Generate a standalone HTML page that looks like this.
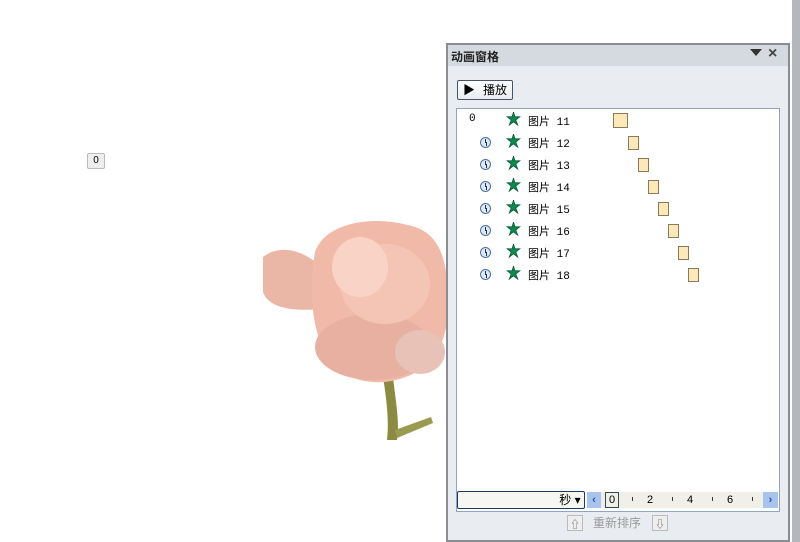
<!DOCTYPE html>
<html><head><meta charset="utf-8"><style>
body{margin:0;width:800px;height:542px;background:#fff;position:relative;overflow:hidden;font-family:"Liberation Sans","Noto Sans CJK SC",sans-serif;}
.a{position:absolute;white-space:nowrap}
.row{position:absolute;left:458px;width:300px;height:20px;font-size:11px;color:#000;font-family:"Liberation Mono","Noto Sans CJK SC",monospace;white-space:nowrap}
.clk{position:absolute;left:22px;top:3px;width:9px;height:9px;border-radius:50%;border:1px solid #4a6fa5;background:#dfe8f5}
.clk:after{content:"";position:absolute;left:4px;top:1px;width:1px;height:4px;background:#234;box-shadow:1px 3px 0 0 #234}
.star{position:absolute;left:48px;top:0px}
.nm{position:absolute;left:70px;top:1px;white-space:nowrap}
.bar{position:absolute;top:2px;width:9px;height:12px;background:#fde8b8;border:1px solid #8a7a5a}
</style></head><body>
<div class="a" style="left:87px;top:153px;width:16px;height:14px;border:1px solid #bbb;background:#eee;font-size:10px;text-align:center;line-height:14px;border-radius:2px">0</div>
<svg class="a" style="left:255px;top:212px" width="195" height="230">
<path d="M128 165 C132 190 134 210 132 228 L142 228 C145 210 140 185 138 165Z" fill="#8a8a40"/>
<path d="M140 218 L176 205 L178 211 L142 226Z" fill="#9a9a50"/>
<path d="M8 45 C30 28 60 45 70 60 L80 95 C50 100 15 100 8 80Z" fill="#eab6a6"/>
<path d="M60 40 C70 10 120 2 160 15 C190 25 195 60 192 110 C188 140 170 165 130 170 C100 172 75 160 65 130 C55 100 55 70 60 40Z" fill="#f1b9a8"/>
<ellipse cx="118" cy="135" rx="58" ry="33" fill="#e8b0a0"/>
<ellipse cx="130" cy="72" rx="45" ry="40" fill="#f4c4b4"/>
<ellipse cx="105" cy="55" rx="28" ry="30" fill="#f9d4c6"/>
<ellipse cx="165" cy="140" rx="25" ry="22" fill="#e8c2b6"/>
</svg>
<div class="a" style="left:792px;top:0;width:8px;height:542px;background:#b4b8bd"></div>
<div class="a" style="left:446px;top:43px;width:340px;height:495px;border:2px solid #8a8e93;background:#e9edf2"></div>
<div class="a" style="left:448px;top:45px;width:340px;height:21px;background:#d5dae1"></div>
<div class="a" style="left:451px;top:48px;font-size:12px;font-weight:bold;color:#222">动画窗格</div>
<div class="a" style="left:750px;top:49px;width:0;height:0;border-left:6px solid transparent;border-right:6px solid transparent;border-top:7px solid #333"></div>
<div class="a" style="left:768px;top:45px;font-size:16px;font-weight:bold;color:#444">×</div>
<div class="a" style="left:457px;top:80px;width:54px;height:18px;border:1px solid #456;border-radius:2px;background:linear-gradient(#fff,#e8ecf0);font-size:12px;line-height:18px"><span style="margin-left:5px">▶</span><span style="margin-left:8px">播放</span></div>
<div class="a" style="left:456px;top:108px;width:322px;height:402px;border:1px solid #8ea4c1;background:#fff"></div>
<svg width="0" height="0" style="position:absolute"><defs><symbol id="st" viewBox="0 0 16 16"><path d="M8 0 L9.5 5 L15 5 L10.5 8.5 L12.5 14 L8 10.5 L3.5 14 L5.5 8.5 L1 5 L6.5 5Z" fill="#0a8a4c" stroke="#053" stroke-width="0.8"/></symbol></defs></svg>
<div class="row" style="top:112px"><span class="a" style="left:11px;top:1px">0</span><svg class="star" width="15" height="15"><use href="#st"/></svg><span class="nm">图片 11</span><span class="bar" style="left:155px;width:13px;height:13px;top:1px"></span></div>
<div class="row" style="top:134px"><span class="clk"></span><svg class="star" width="15" height="15"><use href="#st"/></svg><span class="nm">图片 12</span><span class="bar" style="left:170px"></span></div>
<div class="row" style="top:156px"><span class="clk"></span><svg class="star" width="15" height="15"><use href="#st"/></svg><span class="nm">图片 13</span><span class="bar" style="left:180px"></span></div>
<div class="row" style="top:178px"><span class="clk"></span><svg class="star" width="15" height="15"><use href="#st"/></svg><span class="nm">图片 14</span><span class="bar" style="left:190px"></span></div>
<div class="row" style="top:200px"><span class="clk"></span><svg class="star" width="15" height="15"><use href="#st"/></svg><span class="nm">图片 15</span><span class="bar" style="left:200px"></span></div>
<div class="row" style="top:222px"><span class="clk"></span><svg class="star" width="15" height="15"><use href="#st"/></svg><span class="nm">图片 16</span><span class="bar" style="left:210px"></span></div>
<div class="row" style="top:244px"><span class="clk"></span><svg class="star" width="15" height="15"><use href="#st"/></svg><span class="nm">图片 17</span><span class="bar" style="left:220px"></span></div>
<div class="row" style="top:266px"><span class="clk"></span><svg class="star" width="15" height="15"><use href="#st"/></svg><span class="nm">图片 18</span><span class="bar" style="left:230px"></span></div>
<div class="a" style="left:457px;top:491px;width:126px;height:16px;border:1px solid #1e3a5f;border-radius:2px;background:#f6f6f2;font-size:12px;line-height:16px;text-align:right"><span>秒 ▾</span>&nbsp;</div>
<div class="a" style="left:587px;top:492px;width:191px;height:16px;background:#f0efe8;font-size:11px;line-height:16px;font-family:'Liberation Sans',sans-serif">
<span class="a" style="left:0;width:14px;height:16px;background:#a8c4ee;color:#1f4fa0;text-align:center;font-weight:bold">‹</span>
<span class="a" style="left:18px;top:0;width:12px;height:14px;border:1px solid #345;text-align:center;line-height:14px">0</span>
<span class="a" style="left:60px">2</span><span class="a" style="left:100px">4</span><span class="a" style="left:140px">6</span>
<span class="a" style="left:45px;top:5px;width:1px;height:4px;background:#333"></span><span class="a" style="left:85px;top:5px;width:1px;height:4px;background:#333"></span><span class="a" style="left:125px;top:5px;width:1px;height:4px;background:#333"></span><span class="a" style="left:165px;top:5px;width:1px;height:4px;background:#333"></span>
<span class="a" style="left:176px;width:15px;height:16px;background:#a8c4ee;color:#1f4fa0;text-align:center;font-weight:bold">›</span></div>
<div class="a" style="left:567px;top:515px;width:14px;height:14px;border:1px solid #bbb;background:#eee;font-size:10px;text-align:center;color:#666">⇧</div>
<div class="a" style="left:593px;top:514px;font-size:12px;color:#999">重新排序</div>
<div class="a" style="left:652px;top:515px;width:14px;height:14px;border:1px solid #bbb;background:#eee;font-size:10px;text-align:center;color:#666">⇩</div>
</body></html>
